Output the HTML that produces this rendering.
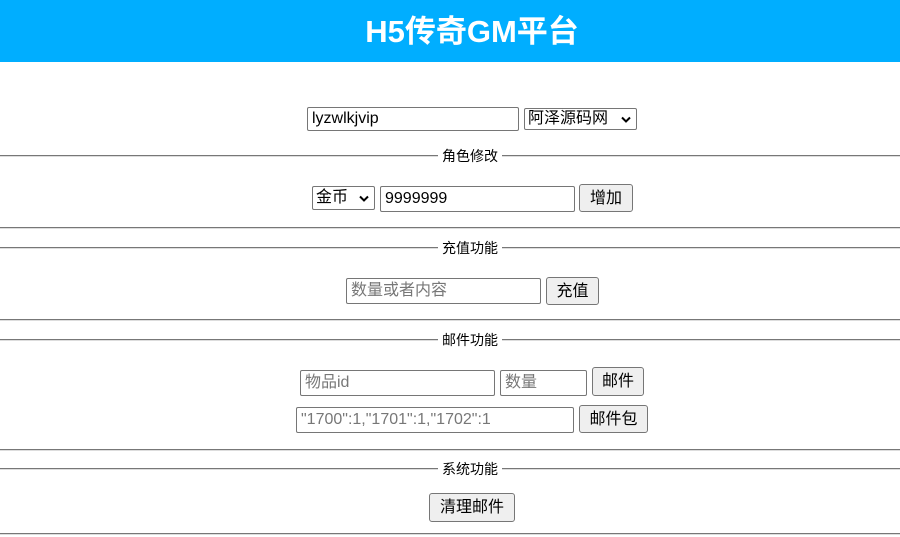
<!DOCTYPE html>
<html><head><meta charset="utf-8"><style>
body{margin:0;width:900px;height:537px;position:relative;background:#fff;font-family:"Liberation Sans","Noto Sans CJK SC",sans-serif;overflow:hidden}
.hd{position:absolute;left:0;top:0;width:900px;height:62px;background:#00aeff;color:#fff;font-weight:bold;font-size:31px;text-align:center;line-height:64px;box-sizing:border-box;padding-left:44px}
.a{position:absolute;box-sizing:border-box;font-size:16px;font-family:"Liberation Sans","Noto Sans CJK SC",sans-serif}
.in{border:1px solid #767676;border-radius:2px;background:#fff;padding:0 4px;line-height:22px;color:#000}
.ph{color:#777}
.bt{border:1px solid #767676;border-radius:3px;background:#efefef;text-align:center;color:#000;line-height:28px}
.sel{border:1px solid #767676;border-radius:2px;background:#fff;padding:0 3px;line-height:20px}
.sel svg{position:absolute;right:5px;top:7px}
.hr{position:absolute;left:0;width:900px;height:0;border-top:1px solid #777;border-bottom:1px solid #ddd}
.lg{position:absolute;font-size:14px;line-height:16px;background:#fff;padding:0 4px;color:#000}
</style></head><body>
<div class="hd">H5传奇GM平台</div>
<div class="a in" style="left:307px;top:107px;width:212px;height:24px">lyzwlkjvip</div>
<div class="a sel" style="left:524px;top:108px;width:113px;height:22px">阿泽源码网<svg width="10" height="7" viewBox="0 0 10 7"><path d="M1 1.5 L5 5.5 L9 1.5" fill="none" stroke="#000" stroke-width="2"/></svg></div>

<div class="hr" style="top:155px"></div><div class="lg" style="left:438px;top:148px">角色修改</div>
<div class="a sel" style="left:312px;top:186px;width:63px;height:24px;line-height:22px">金币<svg width="10" height="7" viewBox="0 0 10 7" style="top:8px"><path d="M1 1.5 L5 5.5 L9 1.5" fill="none" stroke="#000" stroke-width="2"/></svg></div>
<div class="a in" style="left:380px;top:186px;width:195px;height:26px;line-height:24px">9999999</div>
<div class="a bt" style="left:579px;top:184px;width:54px;height:28px">增加</div>
<div class="hr" style="top:227px"></div>

<div class="hr" style="top:247px"></div><div class="lg" style="left:438px;top:240px">充值功能</div>
<div class="a in ph" style="left:346px;top:278px;width:195px;height:26px;line-height:24px">数量或者内容</div>
<div class="a bt" style="left:546px;top:277px;width:53px;height:28px">充值</div>
<div class="hr" style="top:319px"></div>

<div class="hr" style="top:339px"></div><div class="lg" style="left:438px;top:332px">邮件功能</div>
<div class="a in ph" style="left:300px;top:370px;width:195px;height:26px;line-height:24px">物品id</div>
<div class="a in ph" style="left:500px;top:370px;width:87px;height:26px;line-height:24px">数量</div>
<div class="a bt" style="left:592px;top:367px;width:52px;height:29px">邮件</div>
<div class="a in ph" style="left:296px;top:407px;width:278px;height:26px;line-height:24px">"1700":1,"1701":1,"1702":1</div>
<div class="a bt" style="left:579px;top:405px;width:69px;height:28px">邮件包</div>
<div class="hr" style="top:449px"></div>

<div class="hr" style="top:468px"></div><div class="lg" style="left:438px;top:461px">系统功能</div>
<div class="a bt" style="left:429px;top:493px;width:86px;height:29px">清理邮件</div>
<div class="hr" style="top:533px"></div>
</body></html>
